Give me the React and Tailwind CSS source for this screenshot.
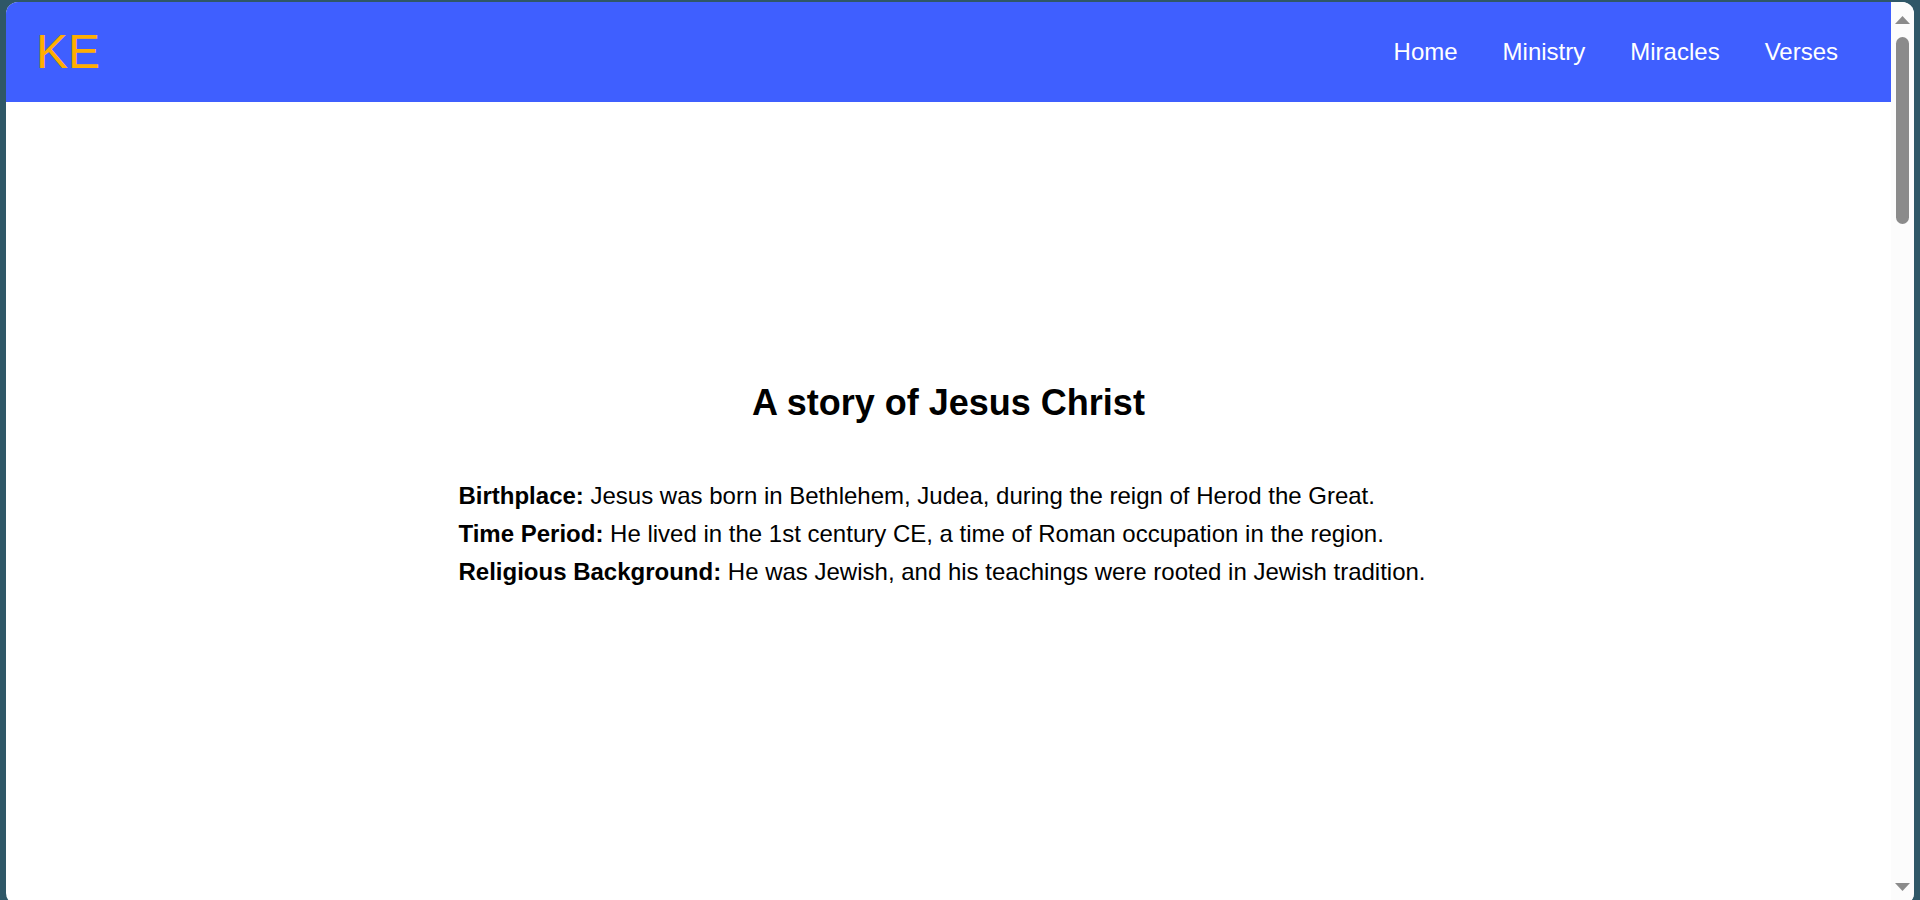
const links = ["Home", "Ministry", "Miracles", "Verses"];

const facts = [
  ["Birthplace:", "Jesus was born in Bethlehem, Judea, during the reign of Herod the Great."],
  ["Time Period:", "He lived in the 1st century CE, a time of Roman occupation in the region."],
  ["Religious Background:", "He was Jewish, and his teachings were rooted in Jewish tradition."],
];

function Scrollbar() {
  return (
    <div aria-hidden="true" className="flex w-[23px] shrink-0 flex-col items-center bg-[#fcfcfc] pt-[14px] pb-[14px]">
      <svg width="15" height="8" viewBox="0 0 15 8" className="shrink-0 fill-[#8b8b8b]">
        <path d="M7.5 0 15 8H0z" />
      </svg>
      <div className="mt-[13px] h-[187px] w-[13px] rounded-full bg-[#8b8b8b]" />
      <svg width="15" height="8" viewBox="0 0 15 8" className="mt-auto shrink-0 fill-[#8b8b8b]">
        <path d="M0 0h15L7.5 8z" />
      </svg>
    </div>
  );
}

export default function App() {
  return (
    <div className="h-screen overflow-hidden bg-[#2f5767] px-[6px] pt-[2px] font-['Liberation_Sans',Arial,sans-serif]">
      <div className="flex h-[calc(100vh+3px)] overflow-hidden rounded-[12px] bg-white">
        <div className="flex min-w-0 grow flex-col">
          <header className="flex h-[100px] shrink-0 items-center justify-between bg-[#3f5fff] pr-[53px] pl-[30px]">
            <a href="#home" className="text-5xl text-[#ffae00]">KE</a>
            <nav className="flex gap-[45px] text-[24px] text-white">
              {links.map((name) => (
                <a key={name} href={"#" + name.toLowerCase()}>{name}</a>
              ))}
            </nav>
          </header>
          <main className="flex grow flex-col items-center pt-[277px] text-black">
            <h1 className="text-[36px] leading-[48px] font-bold">A story of Jesus Christ</h1>
            <ul className="mt-[50px] pr-[13px] text-[24px] leading-[38px]">
              {facts.map(([label, text]) => (
                <li key={label}>
                  <strong>{label}</strong> {text}
                </li>
              ))}
            </ul>
          </main>
        </div>
        <Scrollbar />
      </div>
    </div>
  );
}
